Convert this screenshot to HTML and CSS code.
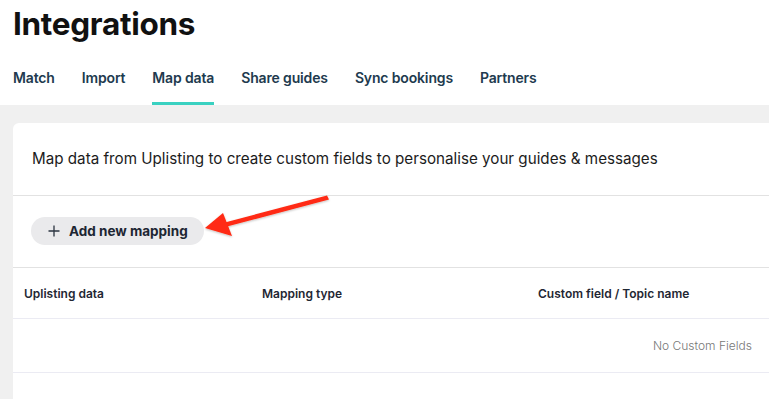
FILE: index.html
```html
<!DOCTYPE html>
<html lang="en">

<head>
    <meta charset="UTF-8">
    <title>Integrations</title>
    <link rel="stylesheet" href="styles.css">
</head>

<body>
    <header class="page-head">
        <h1>Integrations</h1>
        <nav class="tabs">
            <a class="tab">Match</a>
            <a class="tab">Import</a>
            <a class="tab active">Map data</a>
            <a class="tab">Share guides</a>
            <a class="tab">Sync bookings</a>
            <a class="tab">Partners</a>
        </nav>
    </header>

    <main class="content">
        <section class="card">
            <p class="intro">Map data from Uplisting to create custom fields to personalise your guides &amp; messages</p>

            <div class="actions">
                <button class="btn-add" type="button">
                    <svg class="plus" width="12" height="12" viewBox="0 0 12 12">
                        <path d="M6 0.5v11M0.5 6h11" stroke="#2b3440" stroke-width="1.3" fill="none"/>
                    </svg>
                    Add new mapping
                </button>
            </div>

            <div class="table">
                <div class="row head">
                    <div>Uplisting data</div>
                    <div>Mapping type</div>
                    <div>Custom field / Topic name</div>
                </div>
                <div class="row empty">No Custom Fields</div>
            </div>

            <!-- annotation arrow pointing at the button -->
            <svg class="arrow" width="145" height="60" viewBox="0 0 145 60">
                <defs>
                    <filter id="shadow" x="-20%" y="-40%" width="140%" height="180%">
                        <feDropShadow dx="0" dy="1" stdDeviation="1" flood-color="#000" flood-opacity="0.25"/>
                    </filter>
                </defs>
                <g filter="url(#shadow)" fill="#ff2a12">
                    <path d="M132 10.5 L134 14.5 L30 42 L28 38 Z"/>
                    <path d="M10 43 L28 28 L37 51 Z"/>
                </g>
            </svg>
        </section>
    </main>
</body>

</html>
```

FILE: styles.css
```css
* {
    box-sizing: border-box;
}

html,
body {
    height: 100%;
}

body {
    margin: 0;
    font-family: Inter, "Noto Sans", sans-serif;
    color: #1c1c1c;
    background: #fff;
    overflow: hidden;
    display: flex;
    flex-direction: column;
}

.page-head {
    padding: 0 13px;
}

h1 {
    margin: 0;
    padding-top: 5px;
    font-size: 31.5px;
    line-height: 38px;
    font-weight: 700;
    color: #111;
    letter-spacing: -0.3px;
}

/* tab bar */
.tabs {
    display: flex;
    gap: 27px;
    margin-top: 25px;
}

.tab {
    font-size: 14px;
    line-height: 20px;
    font-weight: 600;
    letter-spacing: -0.15px;
    color: #213a4e;
    padding-bottom: 14px;
    border-bottom: 3px solid transparent;
}

.tab.active {
    border-bottom-color: #3ad1c1;
}

/* grey area with the card */
.content {
    flex: 1;
    background: #f0f0f0;
    padding: 18px 0 0 13px;
}

.card {
    position: relative;
    background: #fff;
    border-radius: 6px 0 0 0;
    height: 100%;
}

.intro {
    margin: 0;
    padding: 26px 19px 26px;
    font-size: 15.2px;
    line-height: 20px;
    border-bottom: 1px solid #e2e2e2;
}

.actions {
    padding: 21px 18px 22px;
    border-bottom: 1px solid #e2e2e2;
}

.btn-add {
    display: flex;
    align-items: center;
    gap: 9px;
    height: 28px;
    padding: 0 16px 0 17px;
    border: none;
    border-radius: 14px;
    background: #eaeaec;
    font-family: Inter, "Noto Sans", sans-serif;
    font-size: 13.5px;
    font-weight: 700;
    color: #1d2633;
}

/* table */
.row {
    border-bottom: 1px solid #ebebf3;
}

.row.head {
    display: grid;
    grid-template-columns: 238px 276px 1fr;
    padding: 0 11px;
    height: 51px;
    align-items: center;
    font-size: 12px;
    font-weight: 600;
    color: #1f2733;
}

.row.empty {
    height: 54px;
    padding-right: 17px;
    display: flex;
    align-items: center;
    justify-content: flex-end;
    font-size: 12px;
    font-weight: 300;
    color: #777;
}

.arrow {
    position: absolute;
    left: 182px;
    top: 62px;
}
```
